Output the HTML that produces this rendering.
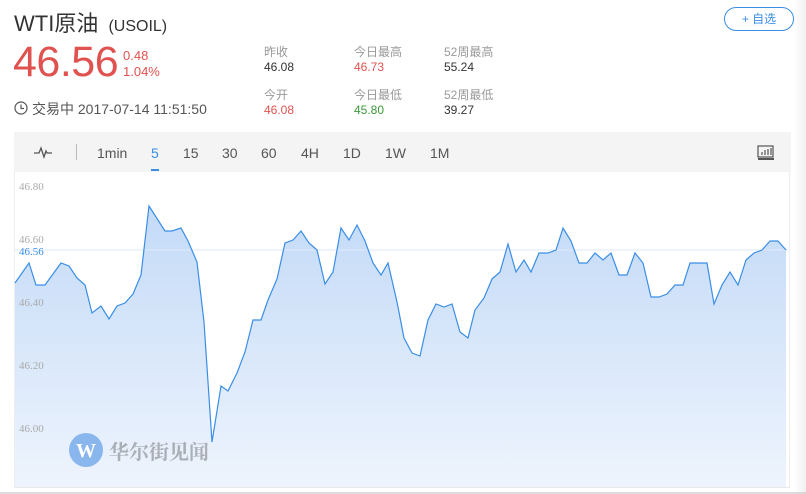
<!DOCTYPE html>
<html><head><meta charset="utf-8"><style>
body{margin:0;width:806px;height:494px;overflow:hidden;background:#fff;font-family:"Liberation Sans","Noto Sans CJK SC",sans-serif;position:relative}
.a{position:absolute;white-space:nowrap}
.lb{font-size:12px;color:#999}
.v{font-size:12px;color:#333}
.tb{font-size:14px;color:#555;top:145px}
.yl{font-family:"Liberation Serif",serif;font-size:11px;color:#aaa;left:19px}
</style></head><body>
<div style="position:absolute;right:0;top:0;width:12px;height:494px;background:linear-gradient(to right,#fff,#f0f0f0)"></div>
<div class="a" style="left:14px;top:6px;font-size:22px;color:#333">WTI原油 <span style="font-size:16px;margin-left:4px">(USOIL)</span></div>
<div class="a" style="left:13px;top:38px;font-size:43px;color:#e0524f;letter-spacing:-0.5px">46.56</div>
<div class="a" style="left:123px;top:48px;font-size:13px;color:#e0524f;line-height:16px">0.48<br>1.04%</div>
<svg class="a" style="left:14px;top:101px" width="14" height="14" viewBox="0 0 14 14"><circle cx="7" cy="7" r="6" fill="none" stroke="#555" stroke-width="1.2"/><path d="M7 3.5V7.5H10" fill="none" stroke="#555" stroke-width="1.2"/></svg>
<div class="a" style="left:32px;top:99px;font-size:14px;color:#555">交易中 2017-07-14 11:51:50</div>
<div class="a lb" style="left:264px;top:43px">昨收</div><div class="a v" style="left:264px;top:60px">46.08</div>
<div class="a lb" style="left:354px;top:43px">今日最高</div><div class="a v" style="left:354px;top:60px;color:#e0524f">46.73</div>
<div class="a lb" style="left:444px;top:43px">52周最高</div><div class="a v" style="left:444px;top:60px">55.24</div>
<div class="a lb" style="left:264px;top:86px">今开</div><div class="a v" style="left:264px;top:103px;color:#e0524f">46.08</div>
<div class="a lb" style="left:354px;top:86px">今日最低</div><div class="a v" style="left:354px;top:103px;color:#3a9a3a">45.80</div>
<div class="a lb" style="left:444px;top:86px">52周最低</div><div class="a v" style="left:444px;top:103px">39.27</div>
<div class="a" style="left:724px;top:7px;width:68px;height:22px;border:1px solid #3a8ee6;border-radius:12px;color:#3a8ee6;font-size:12px;text-align:center;line-height:22px">+ 自选</div>
<div class="a" style="left:14px;top:132px;width:777px;height:40px;background:#f4f4f4"></div>
<div class="a" style="left:14px;top:172px;width:776px;height:316px;border:1px solid #eee;border-top:none;border-bottom:1px solid #e8e8e8;box-sizing:border-box"></div>
<svg class="a" style="left:33px;top:145px" width="20" height="14" viewBox="0 0 20 14"><path d="M1 8H6L8 3L11 12L13 6L14 8H19" fill="none" stroke="#555" stroke-width="1.3"/></svg>
<div class="a" style="left:76px;top:144px;width:1px;height:16px;background:#bbb"></div>
<div class="a tb" style="left:97px">1min</div>
<div class="a tb" style="left:151px;color:#3a8ee6">5</div>
<div class="a" style="left:151px;top:169px;width:8px;height:2px;background:#3a8ee6"></div>
<div class="a tb" style="left:183px">15</div><div class="a tb" style="left:222px">30</div><div class="a tb" style="left:261px">60</div>
<div class="a tb" style="left:301px">4H</div><div class="a tb" style="left:343px">1D</div><div class="a tb" style="left:385px">1W</div><div class="a tb" style="left:430px">1M</div>
<svg class="a" style="left:757px;top:145px" width="18" height="16" viewBox="0 0 18 16"><rect x="1" y="1" width="15" height="11" fill="none" stroke="#555" stroke-width="1.2"/><path d="M5 10V7M8 10V5M11 10V4M14 10V3" stroke="#555" stroke-width="1.2"/><rect x="1" y="13" width="16" height="2" fill="#555"/></svg>
<svg class="a" style="left:0;top:0" width="806" height="494">
<defs><linearGradient id="g" x1="0" y1="0" x2="0" y2="1"><stop offset="0" stop-color="#c3daf7"/><stop offset="1" stop-color="#eef4fd"/></linearGradient></defs>
<path fill="url(#g)" d="M15 283 L29 263 36 285 45 285 61 263 69 266 77 278 85 285 92 313 101 306 109 319 117 306 125 303 133 294 141 275 149 206 165 231 172 231 181 228 188 241 197 262 204 322 212 442 221 386 228 391 237 373 245 352 253 320 261 320 268 300 277 279 285 243 293 240 301 231 309 243 317 250 325 284 333 272 341 228 349 240 357 225 365 241 373 263 381 275 388 263 397 302 404 338 412 353 420 356 428 320 436 304 444 307 452 304 460 332 468 338 475 310 484 298 492 279 500 272 508 244 516 272 524 260 531 272 539 253 548 253 556 250 563 228 571 241 579 263 587 263 595 253 603 260 611 253 619 275 627 275 635 253 643 263 651 297 659 297 667 294 675 285 683 285 690 263 707 263 714 304 722 285 730 272 738 285 746 260 754 253 762 250 770 241 778 241 786 250 L786 487 L15 487Z"/>
<line x1="15" y1="250" x2="789" y2="250" stroke="#dde9fb" stroke-width="1"/>
<polyline fill="none" stroke="#3a8ee6" stroke-width="1.2" points="15,283 29,263 36,285 45,285 61,263 69,266 77,278 85,285 92,313 101,306 109,319 117,306 125,303 133,294 141,275 149,206 165,231 172,231 181,228 188,241 197,262 204,322 212,442 221,386 228,391 237,373 245,352 253,320 261,320 268,300 277,279 285,243 293,240 301,231 309,243 317,250 325,284 333,272 341,228 349,240 357,225 365,241 373,263 381,275 388,263 397,302 404,338 412,353 420,356 428,320 436,304 444,307 452,304 460,332 468,338 475,310 484,298 492,279 500,272 508,244 516,272 524,260 531,272 539,253 548,253 556,250 563,228 571,241 579,263 587,263 595,253 603,260 611,253 619,275 627,275 635,253 643,263 651,297 659,297 667,294 675,285 683,285 690,263 707,263 714,304 722,285 730,272 738,285 746,260 754,253 762,250 770,241 778,241 786,250"/>
<circle cx="86" cy="450" r="17" fill="#8ab6ee"/>
<text x="86" y="457" text-anchor="middle" font-family="Liberation Serif,serif" font-weight="bold" font-size="20" fill="#fff">W</text>
<line x1="0" y1="493" x2="806" y2="493" stroke="#bbb"/>
</svg>
<div class="a" style="left:109px;top:436px;font-family:'Noto Serif CJK SC',serif;font-weight:bold;font-size:20px;color:#a0a4aa;opacity:.85">华尔街见闻</div>
<div class="a yl" style="top:181px">46.80</div>
<div class="a yl" style="top:234px">46.60</div>
<div class="a yl" style="top:246px;color:#3a8ee6">46.56</div>
<div class="a yl" style="top:297px">46.40</div>
<div class="a yl" style="top:360px">46.20</div>
<div class="a yl" style="top:423px">46.00</div>
</body></html>
